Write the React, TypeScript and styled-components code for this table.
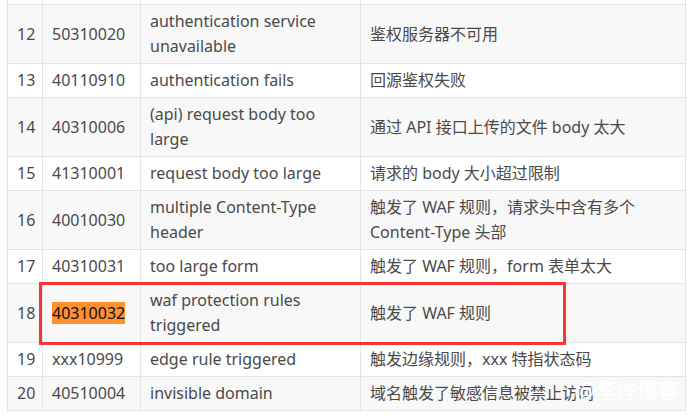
import React from "react";
import styled, {createGlobalStyle} from "styled-components";

const Global = createGlobalStyle`
  html, body {
    margin: 0;
    background: #fff;
  }
  body {
    font-family: "Noto Sans", "Noto Sans CJK SC", sans-serif;
  }
`

const Wrapper = styled.div`
  position: relative;
  width: 695px;
  height: 418px;
  overflow: hidden;
  padding-left: 7px;
  box-sizing: border-box;
`

const Table = styled.table`
  border-collapse: collapse;
  table-layout: fixed;
  width: 678px;
  font-size: 16px;
  line-height: 25px;
  color: #4a4a4a;
`

const Row = styled.tr<{ $striped?: boolean }>`
  background-color: ${p => p.$striped ? '#f8f8f8' : '#fff'};
`

const Cell = styled.td`
  border: 1px solid #e4e4e4;
  padding: 4px 8px 4px 9px;
  vertical-align: middle;
`

const CutCell = styled.td`
  border: 1px solid #e4e4e4;
  border-top: none;
  padding: 0;
  height: 4px;
`

const Mark = styled.span`
  background-color: #ff8f2f;
  color: #111;
`

const RedBox = styled.div`
  position: absolute;
  left: 39px;
  top: 282px;
  width: 527px;
  height: 63px;
  border: 3px solid #fb3535;
  box-sizing: border-box;
  pointer-events: none;
`

const Watermark = styled.div`
  position: absolute;
  left: 574px;
  top: 374px;
  font-family: "Noto Sans CJK SC", sans-serif;
  font-weight: 700;
  font-size: 21px;
  color: rgba(255, 255, 255, 0.88);
  white-space: nowrap;
`

type Item = { no: number, code: React.ReactNode, desc: string, note: string }

const rows: Item[] = [
    {no: 12, code: '50310020', desc: 'authentication service unavailable', note: '鉴权服务器不可用'},
    {no: 13, code: '40110910', desc: 'authentication fails', note: '回源鉴权失败'},
    {no: 14, code: '40310006', desc: '(api) request body too large', note: '通过 API 接口上传的文件 body 太大'},
    {no: 15, code: '41310001', desc: 'request body too large', note: '请求的 body 大小超过限制'},
    {no: 16, code: '40010030', desc: 'multiple Content-Type header', note: '触发了 WAF 规则，请求头中含有多个 Content-Type 头部'},
    {no: 17, code: '40310031', desc: 'too large form', note: '触发了 WAF 规则，form 表单太大'},
    {no: 18, code: <Mark>40310032</Mark>, desc: 'waf protection rules triggered', note: '触发了 WAF 规则'},
    {no: 19, code: 'xxx10999', desc: 'edge rule triggered', note: '触发边缘规则，xxx 特指状态码'},
    {no: 20, code: '40510004', desc: 'invisible domain', note: '域名触发了敏感信息被禁止访问'},
]

const App = () => {
    return (
        <Wrapper>
            <Global/>
            <Table>
                <colgroup>
                    <col style={{width: 35}}/>
                    <col style={{width: 98}}/>
                    <col style={{width: 220}}/>
                    <col style={{width: 325}}/>
                </colgroup>
                <tbody>
                <Row>
                    <CutCell/><CutCell/><CutCell/><CutCell/>
                </Row>
                {rows.map(r =>
                    <Row key={r.no} $striped={r.no % 2 === 0}>
                        <Cell>{r.no}</Cell>
                        <Cell>{r.code}</Cell>
                        <Cell>{r.desc}</Cell>
                        <Cell>{r.note}</Cell>
                    </Row>
                )}
                </tbody>
            </Table>
            <RedBox/>
            <Watermark>@李洋博客</Watermark>
        </Wrapper>
    );
}

export default App;
